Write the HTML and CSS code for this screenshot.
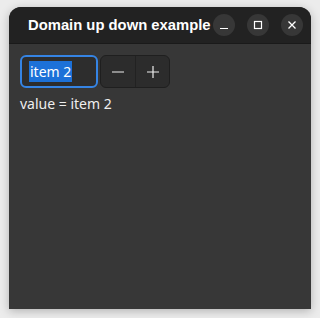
FILE: index.html
```html
<!DOCTYPE html>
<html lang="en">
<head>
    <meta charset="UTF-8">
    <title>Domain up down example</title>
    <link rel="stylesheet" href="styles.css">
</head>
<body>
    <div class="window">
        <div class="titlebar">
            <span class="title">Domain up down example</span>
            <div class="controls">
                <button class="ctrl">
                    <svg width="10" height="10" viewBox="0 0 10 10"><path d="M1 8.5h8" stroke="#fff" stroke-width="1.2"/></svg>
                </button>
                <button class="ctrl">
                    <svg width="10" height="10" viewBox="0 0 10 10"><rect x="1.5" y="1.5" width="7" height="7" fill="none" stroke="#fff" stroke-width="1.2"/></svg>
                </button>
                <button class="ctrl">
                    <svg width="10" height="10" viewBox="0 0 10 10"><path d="M1.5 1.5l7 7M8.5 1.5l-7 7" stroke="#fff" stroke-width="1.3"/></svg>
                </button>
            </div>
        </div>
        <div class="content">
            <div class="spin">
                <div class="entry"><span class="sel">item 2</span></div>
                <div class="steps">
                    <button class="step">
                        <svg width="14" height="14" viewBox="0 0 14 14"><path d="M1 7h12" stroke="#eee" stroke-width="1.2"/></svg>
                    </button>
                    <button class="step">
                        <svg width="14" height="14" viewBox="0 0 14 14"><path d="M1 7h12M7 1v12" stroke="#eee" stroke-width="1.2"/></svg>
                    </button>
                </div>
            </div>
            <div class="value">value = item 2</div>
        </div>
    </div>
</body>
</html>
```

FILE: styles.css
```css
body {
    margin: 0;
    background-color: #ececec;
    font-family: "Noto Sans", "Liberation Sans", sans-serif;
}

.window {
    margin: 7px 9px 9px 9px;
    width: 302px;
    height: 302px;
    background-color: #373737;
    border-radius: 12px 12px 0 0;
    box-shadow: 0 2px 10px rgba(0, 0, 0, 0.25);
    overflow: hidden;
    display: flex;
    flex-direction: column;
}

.titlebar {
    height: 36px;
    background-color: #222;
    border-bottom: 1px solid #1a1a1a;
    display: flex;
    align-items: center;
    padding: 0 8px 0 19px;
}

.title {
    color: #fff;
    font-family: "Liberation Sans", sans-serif;
    font-weight: bold;
    font-size: 14.8px;
    flex: 1;
    white-space: nowrap;
}

.controls {
    display: flex;
    gap: 12px;
}

.ctrl {
    width: 22px;
    height: 22px;
    border-radius: 50%;
    border: none;
    background-color: #373737;
    padding: 0;
    display: flex;
    align-items: center;
    justify-content: center;
}

.content {
    padding: 11px;
}

.spin {
    display: flex;
    gap: 2px;
}

.entry {
    width: 67px;
    height: 29px;
    border: 2px solid #3584e4;
    border-radius: 6px;
    background-color: #2d2d2d;
    display: flex;
    align-items: center;
    padding-left: 7px;
    box-sizing: content-box;
}

.sel {
    background-color: #1c71d8;
    color: #fff;
    font-size: 14px;
    line-height: 21px;
    padding: 0 1px;
}

.steps {
    display: flex;
    border: 1px solid #1f1f1f;
    border-radius: 6px;
    background-color: #2c2c2c;
    overflow: hidden;
}

.step {
    width: 34px;
    height: 31px;
    border: none;
    background: none;
    padding: 0;
    display: flex;
    align-items: center;
    justify-content: center;
}

.step + .step {
    border-left: 1px solid #222;
}

.value {
    color: #eee;
    font-size: 14px;
    margin-top: 6px;
}
```
